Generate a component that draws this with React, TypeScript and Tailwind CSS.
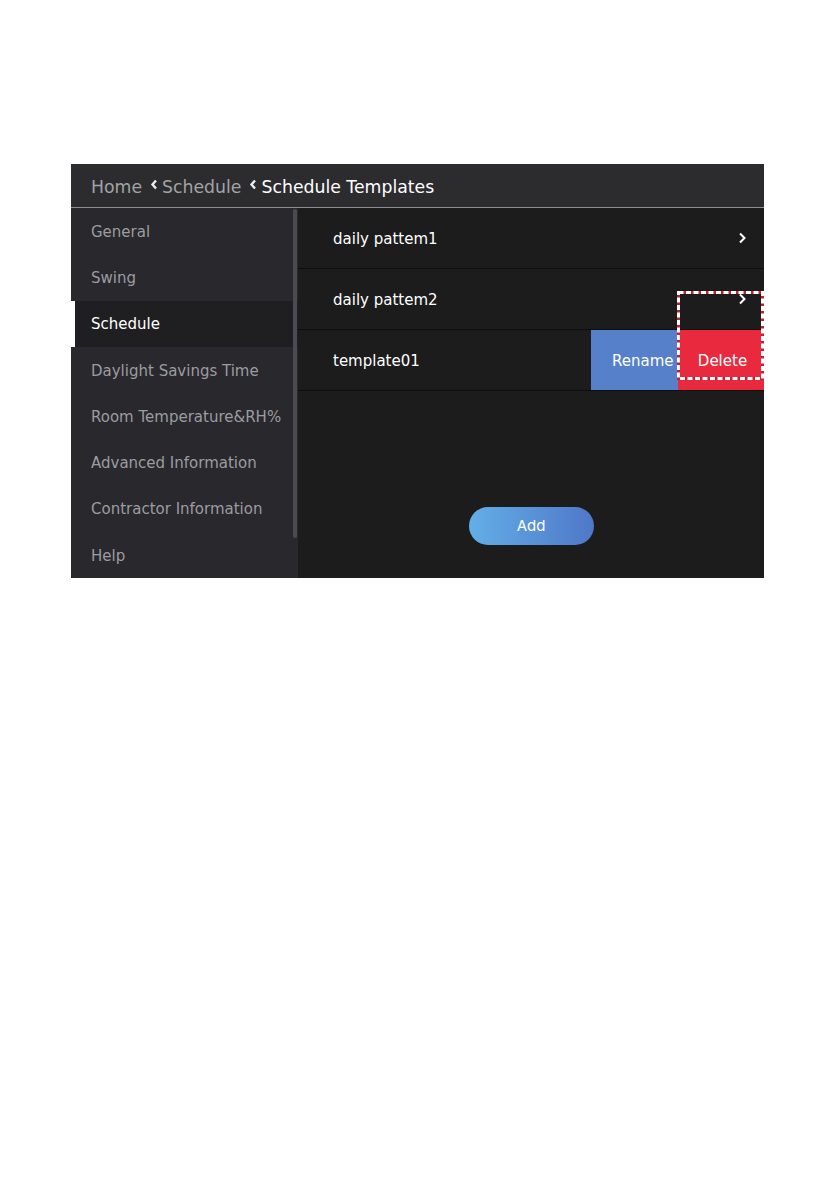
import React from "react";

const menu = [
  "General",
  "Swing",
  "Schedule",
  "Daylight Savings Time",
  "Room Temperature&RH%",
  "Advanced Information",
  "Contractor Information",
  "Help",
];

function Chevron({ className = "" }: { className?: string }) {
  return (
    <svg width="8" height="12" viewBox="0 0 8 12" className={className}>
      <path d="M2 1.5 6.5 6 2 10.5" fill="none" stroke="#ffffff" strokeWidth="2" />
    </svg>
  );
}

function BackChevron() {
  return (
    <svg width="8" height="11" viewBox="0 0 8 11" className="ml-[8px] mr-[4px] mb-[6px]">
      <path d="M6 1.5 2.5 5.5 6 9.5" fill="none" stroke="#ececec" strokeWidth="2.4" />
    </svg>
  );
}

export default function App() {
  return (
    <div className="min-h-[1191px] w-[836px] bg-white pt-[164px] pl-[71px]" style={{ fontFamily: '"DejaVu Sans", sans-serif' }}>
      <div className="relative flex h-[414px] w-[693px] flex-col">
        {/* breadcrumb header */}
        <div className="flex h-[44px] items-center border-b border-[#8d8d8f] bg-[#2c2c2f] pl-[20px] pt-[4px] text-[17.3px] leading-none">
          <span className="text-[#a3a3a6]">Home</span>
          <BackChevron />
          <span className="text-[#a3a3a6]">Schedule</span>
          <BackChevron />
          <span className="text-white">Schedule Templates</span>
        </div>

        <div className="flex min-h-0 flex-1">
          {/* side menu */}
          <div className="relative flex w-[227px] flex-col bg-[#29282d]">
            {menu.map((m) =>
              m === "Schedule" ? (
                <div key={m} className="flex flex-1 items-center border-l-4 border-white bg-[#1f1f21] pl-[16px] pt-[2px] text-[15px] text-white">
                  {m}
                </div>
              ) : (
                <div key={m} className="flex flex-1 items-center pl-[20px] pt-[2px] text-[15px] text-[#9c9ca0]">
                  {m}
                </div>
              )
            )}
            <div className="absolute right-[1px] top-[1px] h-[329px] w-[4px] rounded-[2px] bg-[#4b4b51]" />
          </div>

          {/* template list */}
          <div className="flex flex-1 flex-col bg-[#1c1c1c]">
            <div className="flex h-[61px] items-center justify-between border-b border-[#0f0f0f] pl-[35px] pr-[18px] text-[15px] text-white">
              <span className="pt-[2px]">daily pattem1</span>
              <Chevron />
            </div>
            <div className="flex h-[61px] items-center justify-between border-b border-[#0f0f0f] pl-[35px] pr-[18px] text-[15px] text-white">
              <span className="pt-[2px]">daily pattem2</span>
              <Chevron />
            </div>
            <div className="flex h-[61px] items-stretch border-b border-[#0f0f0f] pt-[3px] text-[15px] text-white">
              <span className="flex flex-1 items-center pl-[35px]">template01</span>
              <div className="-mt-[3px] flex w-[87px] items-center bg-[#5680c9] pl-[21px] pt-[3px]">Rename</div>
              <div className="-mt-[3px] flex w-[86px] items-center justify-center bg-[#e9293d] pl-[3px] pt-[3px]">Delete</div>
            </div>

            <div className="flex flex-1 items-start justify-center pt-[116px]">
              <button
                className="h-[38px] w-[125px] rounded-full bg-gradient-to-r from-[#63afe7] to-[#4f77c8] text-[15px] text-white"
                style={{ fontFamily: "Inter, sans-serif" }}
              >
                Add
              </button>
            </div>
          </div>
        </div>

        {/* highlight marker over the delete action */}
        <svg className="absolute left-[606px] top-[127px]" width="87" height="89" viewBox="0 0 87 89">
          <rect x="1.5" y="1.5" width="84" height="86" fill="none" stroke="#c51f2e" strokeWidth="3" />
          <rect x="1.5" y="1.5" width="84" height="86" fill="none" stroke="#ffffff" strokeWidth="3" strokeDasharray="5 2.5" />
        </svg>
      </div>
    </div>
  );
}
